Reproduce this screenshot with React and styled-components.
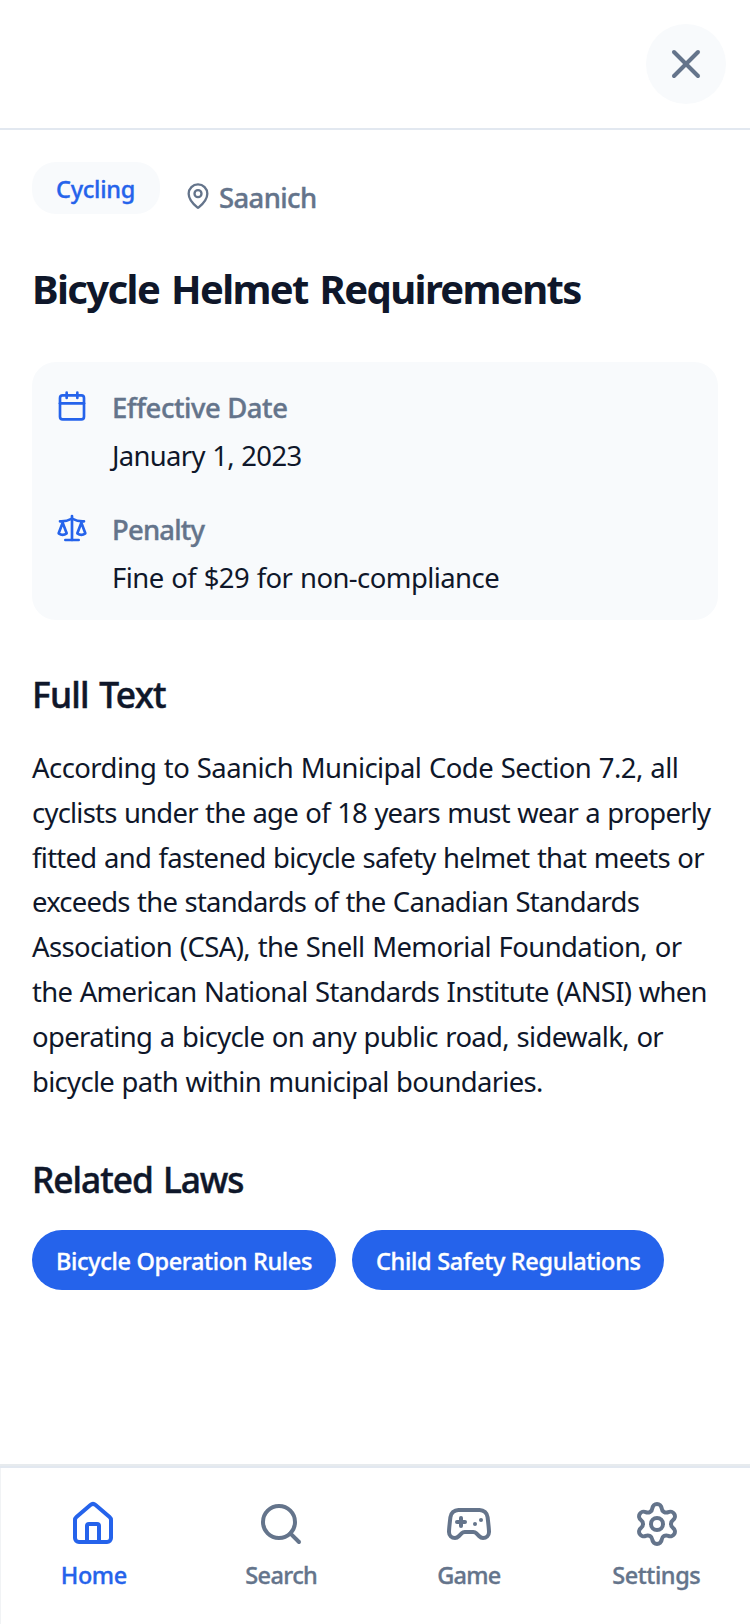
import React from 'react';
import styled, { createGlobalStyle } from 'styled-components';
import { X, MapPin, Calendar, Scale, House, Search, Gamepad2, Settings } from 'lucide-react';

const Global = createGlobalStyle`
  *, *::before, *::after { box-sizing: border-box; }
  body {
    margin: 0;
    background: #fff;
    color: #0f172a;
    font-family: "Noto Sans", "Open Sans", sans-serif;
  }
`;

const Screen = styled.div`
  display: flex;
  flex-direction: column;
  height: 1624px;
  overflow: hidden;
`;

const Header = styled.header`
  display: flex;
  justify-content: flex-end;
  align-items: center;
  flex: none;
  height: 130px;
  padding: 0 24px;
  border-bottom: 2px solid #e2e8f0;
`;

const CloseButton = styled.button`
  display: flex;
  align-items: center;
  justify-content: center;
  width: 80px;
  height: 80px;
  padding: 0;
  border: 0;
  border-radius: 50%;
  background: #f8fafc;
  color: #64748b;
`;

const Content = styled.main`
  flex: 1;
  min-height: 0;
  padding: 32px;
`;

const MetaRow = styled.div`
  display: flex;
  align-items: center;
  gap: 24px;
`;

const Text = styled.span`
  letter-spacing: ${(p) => p.$track || 0}px;
  white-space: nowrap;
`;

const Category = styled.div`
  width: 128px;
  height: 52px;
  margin-bottom: 16px;
  padding: 1px 0 0 24px;
  border-radius: 24px;
  background: #f8fafc;
  color: #2563eb;
  font-size: 23.5px;
  font-weight: 500;
  line-height: 52px;
  -webkit-text-stroke: 0.35px;
`;

const Place = styled.div`
  display: flex;
  align-items: center;
  gap: 7px;
  color: #64748b;
  font-size: 27.44px;
  font-weight: 500;
  line-height: 44px;
  -webkit-text-stroke: 0.4px;

  svg { flex: none; }
  span { padding-top: 3px; }
`;

const Title = styled.h1`
  margin: 32px 0 0;
  font-size: 40px;
  font-weight: 700;
  line-height: 54px;
  word-spacing: 3px;
`;

const InfoCard = styled.section`
  display: flex;
  flex-direction: column;
  gap: 34px;
  height: 258px;
  margin-top: 46px;
  padding: 24px;
  border-radius: 24px;
  background: #f8fafc;
`;

const InfoItem = styled.div`
  display: flex;
  gap: 24px;

  svg {
    flex: none;
    margin-top: 4px;
    color: #2563eb;
  }
`;

const InfoLabel = styled.div`
  padding-top: 1px;
  color: #64748b;
  font-size: 27.44px;
  font-weight: 500;
  line-height: 42px;
  -webkit-text-stroke: 0.4px;
`;

const InfoValue = styled.div`
  margin-top: 8px;
  font-size: 27.44px;
  line-height: 37px;
  word-spacing: 1px;
`;

const SectionTitle = styled.h2`
  margin: ${(p) => p.$top}px 0 0;
  font-size: 35.3px;
  font-weight: 500;
  line-height: 48px;
  word-spacing: 2px;
  -webkit-text-stroke: 0.5px;
`;

const Body = styled.p`
  margin: 28px 0 0;
  font-size: 27.44px;
  line-height: 44.8px;
  word-spacing: 1px;

  span { display: block; }
`;

const Chips = styled.div`
  display: flex;
  gap: 16px;
  margin-top: 27px;
`;

const Chip = styled.div`
  width: ${(p) => p.$width}px;
  height: 60px;
  padding: 1px 0 0 24px;
  border-radius: 30px;
  background: #2563eb;
  color: #fff;
  font-size: 23.5px;
  font-weight: 500;
  line-height: 60px;
  -webkit-text-stroke: 0.35px;
`;

const Nav = styled.nav`
  display: grid;
  grid-template-columns: repeat(4, 1fr);
  flex: none;
  height: 158px;
  border-top: 2px solid #e2e8f0;
  background: #fff;
  box-shadow: inset 1px 0 0 #f1f3f5, 0 -2px 0 #e7ebee;
`;

const NavItem = styled.a`
  display: flex;
  flex-direction: column;
  align-items: center;
  padding-top: 32px;
  color: ${(p) => (p.$active ? '#2563eb' : '#64748b')};
  font-size: 23.5px;
  font-weight: 500;
  line-height: 32px;

  svg { margin-left: ${(p) => p.$iconShift || 0}px; }
  span {
    margin-top: 11px;
    -webkit-text-stroke: 0.35px;
  }
`;

const facts = [
  { icon: Calendar, label: 'Effective Date', labelTrack: -0.42, value: 'January 1, 2023', valueTrack: -0.68 },
  { icon: Scale, label: 'Penalty', labelTrack: -0.8, value: 'Fine of $29 for non-compliance', valueTrack: -0.55 },
];

const lines = [
  ['According to Saanich Municipal Code Section 7.2, all', -0.536],
  ['cyclists under the age of 18 years must wear a properly', -0.765],
  ['fitted and fastened bicycle safety helmet that meets or', -0.695],
  ['exceeds the standards of the Canadian Standards', -0.76],
  ['Association (CSA), the Snell Memorial Foundation, or', -0.577],
  ['the American National Standards Institute (ANSI) when', -0.704],
  ['operating a bicycle on any public road, sidewalk, or', -0.637],
  ['bicycle path within municipal boundaries.', -0.673],
];

const related = [
  { name: 'Bicycle Operation Rules', width: 304, track: -0.342 },
  { name: 'Child Safety Regulations', width: 312, track: -0.308 },
];

const tabs = [
  { icon: House, name: 'Home', track: -0.4, active: true, iconShift: -2 },
  { icon: Search, name: 'Search', track: -0.6 },
  { icon: Gamepad2, name: 'Game', track: -0.76 },
  { icon: Settings, name: 'Settings', track: -0.419, iconShift: 2 },
];

export default function App() {
  return (
    <Screen>
      <Global />
      <Header>
        <CloseButton aria-label="Close"><X size={48} /></CloseButton>
      </Header>
      <Content>
        <MetaRow>
          <Category><Text $track={-0.25}>Cycling</Text></Category>
          <Place>
            <MapPin size={28} />
            <Text $track={-0.6}>Saanich</Text>
          </Place>
        </MetaRow>
        <Title><Text $track={-1.62}>Bicycle Helmet Requirements</Text></Title>
        <InfoCard>
          {facts.map(({ icon: Icon, ...f }) => (
            <InfoItem key={f.label}>
              <Icon size={32} />
              <div>
                <InfoLabel><Text $track={f.labelTrack}>{f.label}</Text></InfoLabel>
                <InfoValue><Text $track={f.valueTrack}>{f.value}</Text></InfoValue>
              </div>
            </InfoItem>
          ))}
        </InfoCard>
        <SectionTitle $top={50}><Text $track={-0.75}>Full Text</Text></SectionTitle>
        <Body>
          {lines.map(([line, track]) => <Text key={line} $track={track}>{line} </Text>)}
        </Body>
        <SectionTitle $top={51}><Text $track={-1.03}>Related Laws</Text></SectionTitle>
        <Chips>
          {related.map((r) => (
            <Chip key={r.name} $width={r.width}><Text $track={r.track}>{r.name}</Text></Chip>
          ))}
        </Chips>
      </Content>
      <Nav>
        {tabs.map(({ icon: Icon, ...t }) => (
          <NavItem key={t.name} $active={t.active} $iconShift={t.iconShift}>
            <Icon size={48} />
            <Text $track={t.track}>{t.name}</Text>
          </NavItem>
        ))}
      </Nav>
    </Screen>
  );
}
